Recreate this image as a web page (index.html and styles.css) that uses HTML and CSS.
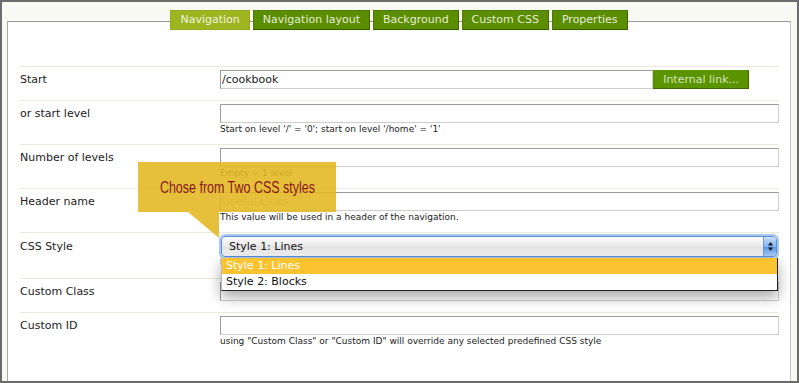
FILE: index.html
```html
<!DOCTYPE html>
<html lang="en">
<head>
    <meta charset="UTF-8">
    <title>Navigation settings</title>
    <link rel="stylesheet" href="styles.css">
</head>
<body>
    <div class="frame">
        <div class="panel">
            <ul class="tabs">
                <li class="tab active">Navigation</li>
                <li class="tab">Navigation layout</li>
                <li class="tab">Background</li>
                <li class="tab">Custom CSS</li>
                <li class="tab">Properties</li>
            </ul>

            <form class="form">
                <div class="row">
                    <label class="label">Start</label>
                    <div class="link-field">
                        <input class="text" type="text" value="/cookbook">
                        <button class="link-btn" type="button">Internal link...</button>
                    </div>
                </div>

                <div class="row has-hint">
                    <label class="label">or start level</label>
                    <input class="text" type="text">
                    <div class="hint">Start on level '/' = '0'; start on level '/home' = '1'</div>
                </div>

                <div class="row has-hint">
                    <label class="label">Number of levels</label>
                    <input class="text" type="text">
                    <div class="hint">Empty = 1 level</div>
                </div>

                <div class="row has-hint">
                    <label class="label">Header name</label>
                    <input class="text" type="text" placeholder="Useful Links">
                    <div class="hint">This value will be used in a header of the navigation.</div>
                </div>

                <div class="row has-hint">
                    <label class="label">CSS Style</label>
                    <div class="select">
                        <span class="select-value">Style 1: Lines</span>
                        <span class="stepper">
                            <svg width="13" height="19" viewBox="0 0 13 19">
                                <path d="M6.5 5 L9 8.5 L4 8.5 Z" fill="#111"/>
                                <path d="M6.5 14 L9 10.5 L4 10.5 Z" fill="#111"/>
                            </svg>
                        </span>
                        <ul class="dropdown">
                            <li class="option selected">Style 1: Lines</li>
                            <li class="option">Style 2: Blocks</li>
                        </ul>
                    </div>
                    <div class="hint">Use a predefined CSS style for this link list</div>
                </div>

                <div class="row">
                    <label class="label">Custom Class</label>
                    <input class="text" type="text">
                </div>

                <div class="row has-hint">
                    <label class="label">Custom ID</label>
                    <input class="text" type="text">
                    <div class="hint">using "Custom Class" or "Custom ID" will override any selected predefined CSS style</div>
                </div>
            </form>

            <div class="callout"><span class="callout-text">Chose from Two CSS styles</span></div>
        </div>
    </div>
</body>
</html>
```

FILE: styles.css
```css
* {
    margin: 0;
    padding: 0;
    box-sizing: border-box;
}

body {
    font-family: 'DejaVu Sans', Verdana, sans-serif;
    font-size: 11px;
    color: #222;
}

.frame {
    width: 799px;
    height: 383px;
    border: 2px solid #6b6b6b;
    background: #f9f9f3;
    padding: 19px 6px 0 5px;
    display: flex;
    flex-direction: column;
}

.panel {
    flex: 1;
    position: relative;
    background: #fff;
    border-top: 1px solid #9a9a9a;
    border-left: 1px solid #aaaaa2;
    border-right: 1px solid #c4c4c4;
}

/* tabs sit on the top border */
.tabs {
    list-style: none;
    display: flex;
    justify-content: center;
    gap: 3px;
    margin-top: -12px;
}

.tab {
    height: 20px;
    line-height: 18px;
    padding: 0 9px;
    background: #5b8d00;
    color: #e6eed8;
    border: 1px solid #4d7c00;
    border-bottom-color: #365c00;
    border-right-color: #3f6800;
}

.tab.active {
    background: #9db51f;
    border-color: #93ab1a;
    color: #f0f4e0;
}

.form {
    margin-top: 36px;
    padding: 0 11px 0 12px;
}

.row {
    display: grid;
    grid-template-columns: 200px 1fr;
    align-items: center;
    border-top: 1px solid #e8e8df;
    padding: 3px 0 11px;
}

.row.has-hint {
    padding-bottom: 8px;
}

.label {
    grid-column: 1;
    grid-row: 1;
    color: #222;
}

.hint {
    grid-column: 2;
    font-size: 9px;
    line-height: 13px;
    color: #222;
}

.text {
    width: 100%;
    height: 19px;
    border: 1px solid;
    border-color: #9c9c9c #cdcdcd #cdcdcd #9c9c9c;
    font-family: inherit;
    font-size: 11px;
    color: #222;
    padding: 0 1px;
    outline: none;
}

.text::placeholder {
    color: #b4b4b4;
}

.link-field {
    display: flex;
    padding-right: 30px;
}

.link-field .text {
    flex: 1;
}

.link-btn {
    height: 19px;
    padding: 0 9px 0 10px;
    border: none;
    border-right: 1px solid #3e6800;
    border-bottom: 1px solid #3e6800;
    background: #5c9400;
    color: #d6e5bd;
    font-family: inherit;
    font-size: 11px;
}

/* fake mac select, open */
.select {
    position: relative;
    height: 21px;
    margin: 0 2px 0 1px;
    border: 1px solid #5d8fd6;
    border-radius: 4px;
    box-shadow: 0 0 0 2px #a9c8ee;
    background: linear-gradient(#fbfbfb, #ebebeb 45%, #e2e2e2 55%, #f3f3f3);
    display: flex;
    align-items: center;
}

.select-value {
    flex: 1;
    padding-left: 7px;
    color: #111;
}

.stepper {
    width: 13px;
    height: 19px;
    border-left: 1px solid #6f9ad4;
    border-radius: 0 3px 3px 0;
    background: linear-gradient(#c9e0fa, #7fb3ee 50%, #5d9ae6 55%, #a6cdf6);
}

.stepper svg {
    display: block;
}

.dropdown {
    list-style: none;
    position: absolute;
    top: 21px;
    left: -1px;
    width: 557px;
    border: 1px solid #222;
    border-left-color: #bbb;
    border-top: none;
    background: rgba(255, 255, 255, 0.97);
    box-shadow: 0 6px 14px rgba(0, 0, 0, 0.35);
    z-index: 2;
}

.option {
    height: 16px;
    line-height: 16px;
    padding-left: 4px;
    color: #111;
}

.option.selected {
    background: rgba(252, 190, 32, 0.93);
    color: #fff;
}

/* yellow help bubble */
.callout {
    position: absolute;
    left: 130px;
    top: 140px;
    width: 198px;
    height: 50px;
    background: rgba(227, 183, 32, 0.88);
    color: #8a1414;
    font-family: 'Liberation Sans', Arial, sans-serif;
    font-size: 16px;
    line-height: 52px;
    text-align: center;
    white-space: nowrap;
    z-index: 3;
}

.callout-text {
    display: inline-block;
    transform: scaleX(0.78);
}

.callout::after {
    content: '';
    position: absolute;
    left: 50px;
    top: 50px;
    width: 31px;
    height: 26px;
    background: rgba(227, 183, 32, 0.88);
    clip-path: polygon(0 0, 100% 0, 100% 100%);
}
```
